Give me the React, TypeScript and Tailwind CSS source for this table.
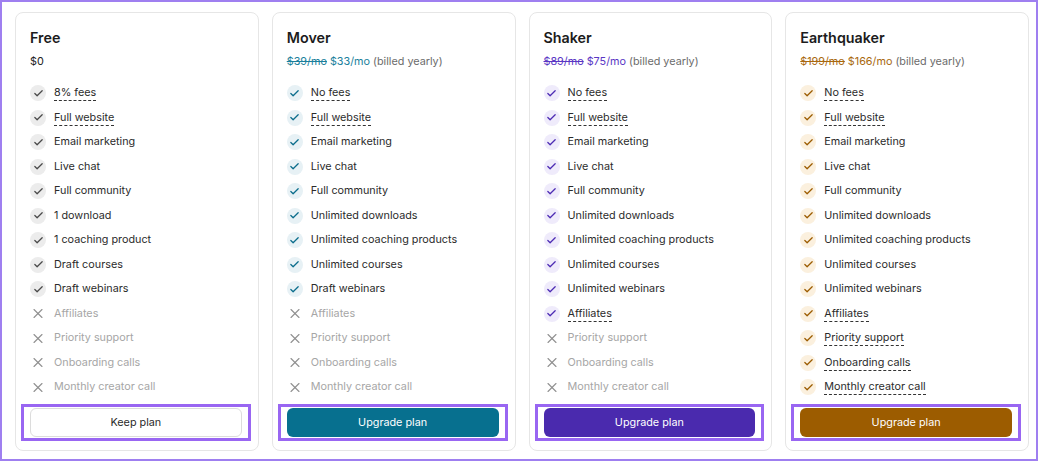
import { Check, X } from "lucide-react";

type Feature = { label: string; on: boolean; tip?: boolean };

type Plan = {
  name: string;
  oldPrice?: string;
  price: string;
  features: Feature[];
  button: string;
  buttonClass: string;
  accentText: string;
  checkBg: string;
  checkColor: string;
};

const f = (label: string, on = true, tip = false): Feature => ({ label, on, tip });

const plans: Plan[] = [
  {
    name: "Free",
    price: "$0",
    features: [
      f("8% fees", true, true),
      f("Full website", true, true),
      f("Email marketing"),
      f("Live chat"),
      f("Full community"),
      f("1 download"),
      f("1 coaching product"),
      f("Draft courses"),
      f("Draft webinars"),
      f("Affiliates", false),
      f("Priority support", false),
      f("Onboarding calls", false),
      f("Monthly creator call", false),
    ],
    button: "Keep plan",
    buttonClass: "bg-white border border-[#dcdcdc] text-[#2a2a2a]",
    accentText: "text-[#222]",
    checkBg: "bg-[#ececec]",
    checkColor: "text-[#4a4a4a]",
  },
  {
    name: "Mover",
    oldPrice: "$39/mo",
    price: "$33/mo",
    features: [
      f("No fees", true, true),
      f("Full website", true, true),
      f("Email marketing"),
      f("Live chat"),
      f("Full community"),
      f("Unlimited downloads"),
      f("Unlimited coaching products"),
      f("Unlimited courses"),
      f("Draft webinars"),
      f("Affiliates", false),
      f("Priority support", false),
      f("Onboarding calls", false),
      f("Monthly creator call", false),
    ],
    button: "Upgrade plan",
    buttonClass: "bg-[#07708f] text-white",
    accentText: "text-[#1b7f9c]",
    checkBg: "bg-[#e7f1f5]",
    checkColor: "text-[#0b6d8c]",
  },
  {
    name: "Shaker",
    oldPrice: "$89/mo",
    price: "$75/mo",
    features: [
      f("No fees", true, true),
      f("Full website", true, true),
      f("Email marketing"),
      f("Live chat"),
      f("Full community"),
      f("Unlimited downloads"),
      f("Unlimited coaching products"),
      f("Unlimited courses"),
      f("Unlimited webinars"),
      f("Affiliates", true, true),
      f("Priority support", false),
      f("Onboarding calls", false),
      f("Monthly creator call", false),
    ],
    button: "Upgrade plan",
    buttonClass: "bg-[#4a2aae] text-white",
    accentText: "text-[#5a36c4]",
    checkBg: "bg-[#efebfb]",
    checkColor: "text-[#4d2cb4]",
  },
  {
    name: "Earthquaker",
    oldPrice: "$199/mo",
    price: "$166/mo",
    features: [
      f("No fees", true, true),
      f("Full website", true, true),
      f("Email marketing"),
      f("Live chat"),
      f("Full community"),
      f("Unlimited downloads"),
      f("Unlimited coaching products"),
      f("Unlimited courses"),
      f("Unlimited webinars"),
      f("Affiliates", true, true),
      f("Priority support", true, true),
      f("Onboarding calls", true, true),
      f("Monthly creator call", true, true),
    ],
    button: "Upgrade plan",
    buttonClass: "bg-[#9c5c00] text-white",
    accentText: "text-[#a8680e]",
    checkBg: "bg-[#fbf0de]",
    checkColor: "text-[#9c5c00]",
  },
];

function PlanCard({ plan }: { plan: Plan }) {
  return (
    <div className="flex flex-col rounded-lg border border-[#e6e6e6] bg-white pl-[14px] pr-[15px] pt-[14px] pb-[9px]">
      <h2 className="text-[14.3px] leading-[22px] font-semibold text-[#1c1c1c]">{plan.name}</h2>

      {/* Price line */}
      <div className="mt-[4px] text-[10.8px] leading-[18px] text-[#6b6b6b]">
        {plan.oldPrice ? (
          <>
            <span className={`line-through ${plan.accentText}`}>{plan.oldPrice}</span>{" "}
            <span className={plan.accentText}>{plan.price}</span> (billed yearly)
          </>
        ) : (
          <span className="text-[#222]">{plan.price}</span>
        )}
      </div>

      <ul className="mt-[10px] flex flex-col">
        {plan.features.map((ft) => (
          <li key={ft.label} className="flex h-[24.5px] items-center gap-[8px] text-[10.8px]">
            {ft.on ? (
              <span className={`flex h-[16px] w-[16px] items-center justify-center rounded-full ${plan.checkBg}`}>
                <Check size={11} strokeWidth={2.75} className={plan.checkColor} />
              </span>
            ) : (
              <span className="flex h-[16px] w-[16px] items-center justify-center">
                <X size={17} strokeWidth={1.6} className="text-[#8f8f8f]" />
              </span>
            )}
            <span
              className={
                ft.on
                  ? `text-[#2b2b2b] ${ft.tip ? "border-b border-dashed border-[#333] leading-[15px]" : ""}`
                  : "text-[#a6a6a6]"
              }
            >
              {ft.label}
            </span>
          </li>
        ))}
      </ul>

      {/* Highlighted action */}
      <div className="mt-[4px] -ml-[9px] -mr-[8px] border-[3px] border-[#9966f2] px-[6px] py-[1px]">
        <button
          className={`h-[29px] w-full rounded-md text-[10.8px] font-normal ${plan.buttonClass}`}
        >
          {plan.button}
        </button>
      </div>
    </div>
  );
}

export default function App() {
  return (
    <div className="h-[462px] w-[1040px] bg-white" style={{ fontFamily: "Inter, 'Noto Sans', sans-serif" }}>
      <div className="grid h-[461px] w-[1038px] grid-cols-4 gap-[13px] border-2 border-[#9f7ff0] pl-[13px] pr-[7px] pt-[10px] pb-[8px]">
        {plans.map((p) => (
          <PlanCard key={p.name} plan={p} />
        ))}
      </div>
    </div>
  );
}
